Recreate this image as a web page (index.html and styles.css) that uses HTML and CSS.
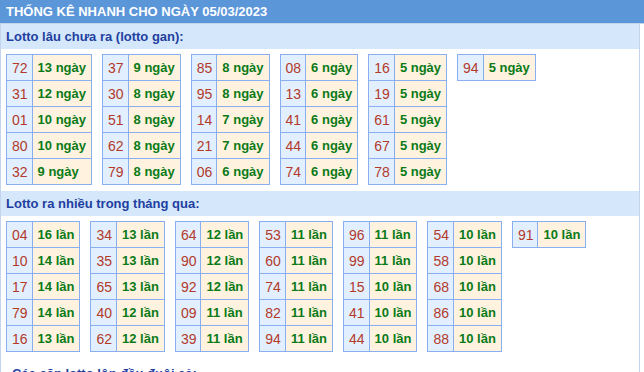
FILE: index.html
```html
<!DOCTYPE html>
<html lang="vi">
<head>
<meta charset="utf-8">
<title>Thống kê nhanh</title>
<link rel="stylesheet" href="styles.css">
</head>
<body>
<div class="title">THỐNG KÊ NHANH CHO NGÀY 05/03/2023</div>
<div class="box">
  <div class="sub">Lotto lâu chưa ra (lotto gan):</div>
  <div class="tables">
    <table><tr><td class="n">72</td><td class="v">13 ngày</td></tr><tr><td class="n">31</td><td class="v">12 ngày</td></tr><tr><td class="n">01</td><td class="v">10 ngày</td></tr><tr><td class="n">80</td><td class="v">10 ngày</td></tr><tr><td class="n">32</td><td class="v">9 ngày</td></tr></table>
    <table><tr><td class="n">37</td><td class="v">9 ngày</td></tr><tr><td class="n">30</td><td class="v">8 ngày</td></tr><tr><td class="n">51</td><td class="v">8 ngày</td></tr><tr><td class="n">62</td><td class="v">8 ngày</td></tr><tr><td class="n">79</td><td class="v">8 ngày</td></tr></table>
    <table><tr><td class="n">85</td><td class="v">8 ngày</td></tr><tr><td class="n">95</td><td class="v">8 ngày</td></tr><tr><td class="n">14</td><td class="v">7 ngày</td></tr><tr><td class="n">21</td><td class="v">7 ngày</td></tr><tr><td class="n">06</td><td class="v">6 ngày</td></tr></table>
    <table><tr><td class="n">08</td><td class="v">6 ngày</td></tr><tr><td class="n">13</td><td class="v">6 ngày</td></tr><tr><td class="n">41</td><td class="v">6 ngày</td></tr><tr><td class="n">44</td><td class="v">6 ngày</td></tr><tr><td class="n">74</td><td class="v">6 ngày</td></tr></table>
    <table><tr><td class="n">16</td><td class="v">5 ngày</td></tr><tr><td class="n">19</td><td class="v">5 ngày</td></tr><tr><td class="n">61</td><td class="v">5 ngày</td></tr><tr><td class="n">67</td><td class="v">5 ngày</td></tr><tr><td class="n">78</td><td class="v">5 ngày</td></tr></table>
    <table><tr><td class="n">94</td><td class="v">5 ngày</td></tr></table>
  </div>
  <div class="sub">Lotto ra nhiều trong tháng qua:</div>
  <div class="tables">
    <table><tr><td class="n">04</td><td class="v">16 lần</td></tr><tr><td class="n">10</td><td class="v">14 lần</td></tr><tr><td class="n">17</td><td class="v">14 lần</td></tr><tr><td class="n">79</td><td class="v">14 lần</td></tr><tr><td class="n">16</td><td class="v">13 lần</td></tr></table>
    <table><tr><td class="n">34</td><td class="v">13 lần</td></tr><tr><td class="n">35</td><td class="v">13 lần</td></tr><tr><td class="n">65</td><td class="v">13 lần</td></tr><tr><td class="n">40</td><td class="v">12 lần</td></tr><tr><td class="n">62</td><td class="v">12 lần</td></tr></table>
    <table><tr><td class="n">64</td><td class="v">12 lần</td></tr><tr><td class="n">90</td><td class="v">12 lần</td></tr><tr><td class="n">92</td><td class="v">12 lần</td></tr><tr><td class="n">09</td><td class="v">11 lần</td></tr><tr><td class="n">39</td><td class="v">11 lần</td></tr></table>
    <table><tr><td class="n">53</td><td class="v">11 lần</td></tr><tr><td class="n">60</td><td class="v">11 lần</td></tr><tr><td class="n">74</td><td class="v">11 lần</td></tr><tr><td class="n">82</td><td class="v">11 lần</td></tr><tr><td class="n">94</td><td class="v">11 lần</td></tr></table>
    <table><tr><td class="n">96</td><td class="v">11 lần</td></tr><tr><td class="n">99</td><td class="v">11 lần</td></tr><tr><td class="n">15</td><td class="v">10 lần</td></tr><tr><td class="n">41</td><td class="v">10 lần</td></tr><tr><td class="n">44</td><td class="v">10 lần</td></tr></table>
    <table><tr><td class="n">54</td><td class="v">10 lần</td></tr><tr><td class="n">58</td><td class="v">10 lần</td></tr><tr><td class="n">68</td><td class="v">10 lần</td></tr><tr><td class="n">86</td><td class="v">10 lần</td></tr><tr><td class="n">88</td><td class="v">10 lần</td></tr></table>
    <table><tr><td class="n">91</td><td class="v">10 lần</td></tr></table>
  </div>
  <div class="sub plain">Các cặp lotto lộn đầu đuôi cả:</div>
</div>
</body>
</html>
```
FILE: styles.css
```css
html, body {
  margin: 0;
  padding: 0;
  background: #fff;
  font-family: "Liberation Sans", Arial, sans-serif;
}
.title {
  background: #5b96d9;
  color: #fff;
  font-size: 13px;
  font-weight: bold;
  height: 23px;
  line-height: 23px;
  padding-left: 6px;
  border-bottom: 1px solid #c2d4ea;
}
.box {
  width: 638px;
  border-left: 1px solid #c3d4ec;
  border-right: 1px solid #c3d4ec;
}
.sub {
  background: #d4e7fb;
  color: #1f3f9f;
  font-size: 13px;
  font-weight: bold;
  height: 25px;
  line-height: 25px;
  padding-left: 5px;
}
.sub.plain {
  background: #fff;
  padding: 3px 0 0 11px;
}
.tables {
  display: flex;
  align-items: flex-start;
  gap: 10px;
  padding: 5px 5px 6px;
}
table {
  border-collapse: collapse;
  font-size: 13px;
}
td {
  border: 1px solid #8aaff0;
  height: 25px;
  white-space: nowrap;
}
td.n {
  background: #e2efff;
  color: #b23a2a;
  text-align: center;
  padding: 0 4px 0 5px;
  font-size: 14px;
}
td.v {
  background: #fff3e0;
  color: #0b7a17;
  font-weight: bold;
  padding: 0 5px;
}
```
